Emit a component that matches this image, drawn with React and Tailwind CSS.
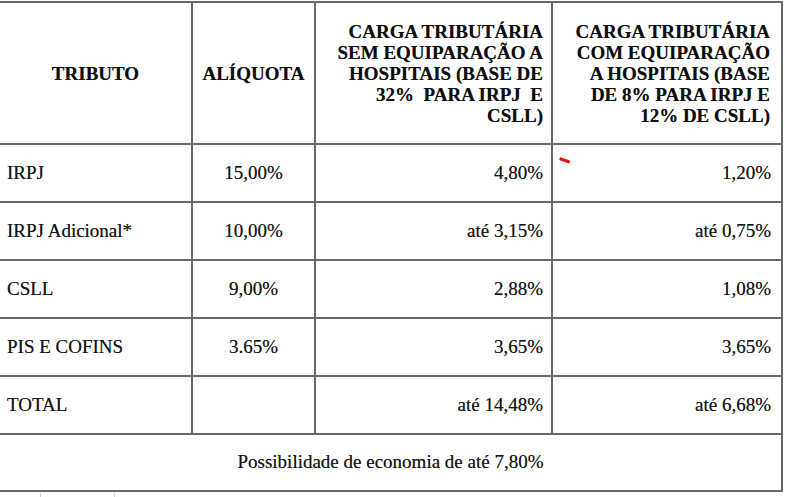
import React from "react";

const rows = [
    { tributo: "IRPJ", aliquota: "15,00%", sem: "4,80%", com: "1,20%" },
    { tributo: "IRPJ Adicional*", aliquota: "10,00%", sem: "até 3,15%", com: "até 0,75%" },
    { tributo: "CSLL", aliquota: "9,00%", sem: "2,88%", com: "1,08%" },
    { tributo: "PIS E COFINS", aliquota: "3.65%", sem: "3,65%", com: "3,65%" },
    { tributo: "TOTAL", aliquota: "", sem: "até 14,48%", com: "até 6,68%" },
];

const App = () => {
    return (
        <div
            className="w-[785px] h-[497px] bg-white overflow-hidden text-[19px] text-[#141414] [text-shadow:0_0_0.6px_rgba(0,0,0,0.55)]"
            style={{ fontFamily: '"Liberation Serif", "Times New Roman", serif' }}
        >
            <div className="mt-px w-[783px] border-t-2 border-[#686868]">
                {/* Cabeçalho */}
                <div className="flex h-[142px] border-b-2 border-[#686868] font-bold leading-[21px] text-[#0e0e0e]">
                    <div className="w-[193px] flex items-center justify-center border-r-2 border-[#686868]">
                        TRIBUTO
                    </div>
                    <div className="w-[123px] flex items-center justify-center border-r-2 border-[#686868]">
                        ALÍQUOTA
                    </div>
                    <div className="w-[237px] flex items-center justify-end pr-[8px] text-right border-r-2 border-[#686868]">
                        <div>
                            CARGA TRIBUTÁRIA
                            <br />
                            SEM EQUIPARAÇÃO A
                            <br />
                            HOSPITAIS (BASE DE
                            <br />
                            32%&nbsp; PARA IRPJ&nbsp; E
                            <br />
                            CSLL)
                        </div>
                    </div>
                    <div className="w-[230px] flex items-center justify-end pr-[11px] text-right border-r-2 border-[#686868]">
                        <div>
                            CARGA TRIBUTÁRIA
                            <br />
                            COM EQUIPARAÇÃO
                            <br />
                            A HOSPITAIS (BASE
                            <br />
                            DE 8% PARA IRPJ E
                            <br />
                            12% DE CSLL)
                        </div>
                    </div>
                </div>

                {/* Linhas */}
                {rows.map((row, i) => (
                    <div key={i} className="flex h-[58px] border-b-2 border-[#686868]">
                        <div className="w-[193px] flex items-center pl-[7px] border-r-2 border-[#686868]">
                            {row.tributo}
                        </div>
                        <div className="w-[123px] flex items-center justify-center border-r-2 border-[#686868]">
                            {row.aliquota}
                        </div>
                        <div className="w-[237px] flex items-center justify-end pr-[8px] border-r-2 border-[#686868]">
                            {row.sem}
                        </div>
                        <div className="relative w-[230px] flex items-center justify-end pr-[10px] border-r-2 border-[#686868]">
                            {i === 0 && (
                                <svg
                                    className="absolute left-[6px] top-[12px]"
                                    width="12"
                                    height="7"
                                    viewBox="0 0 12 7"
                                >
                                    <path
                                        d="M2 2 L9.5 4.8"
                                        stroke="#e3171b"
                                        strokeWidth="3.2"
                                        strokeLinecap="round"
                                    />
                                </svg>
                            )}
                            {row.com}
                        </div>
                    </div>
                ))}

                {/* Rodapé */}
                <div className="flex h-[57px] items-center justify-center border-b-2 border-r-2 border-[#686868]">
                    Possibilidade de economia de até 7,80%
                </div>
            </div>

            <div className="flex h-[4px] mt-px">
                <div className="ml-[40px] w-px bg-[#c9cfe0]"></div>
                <div className="ml-[73px] w-px bg-[#c9cfe0]"></div>
            </div>
        </div>
    );
};

export default App;
